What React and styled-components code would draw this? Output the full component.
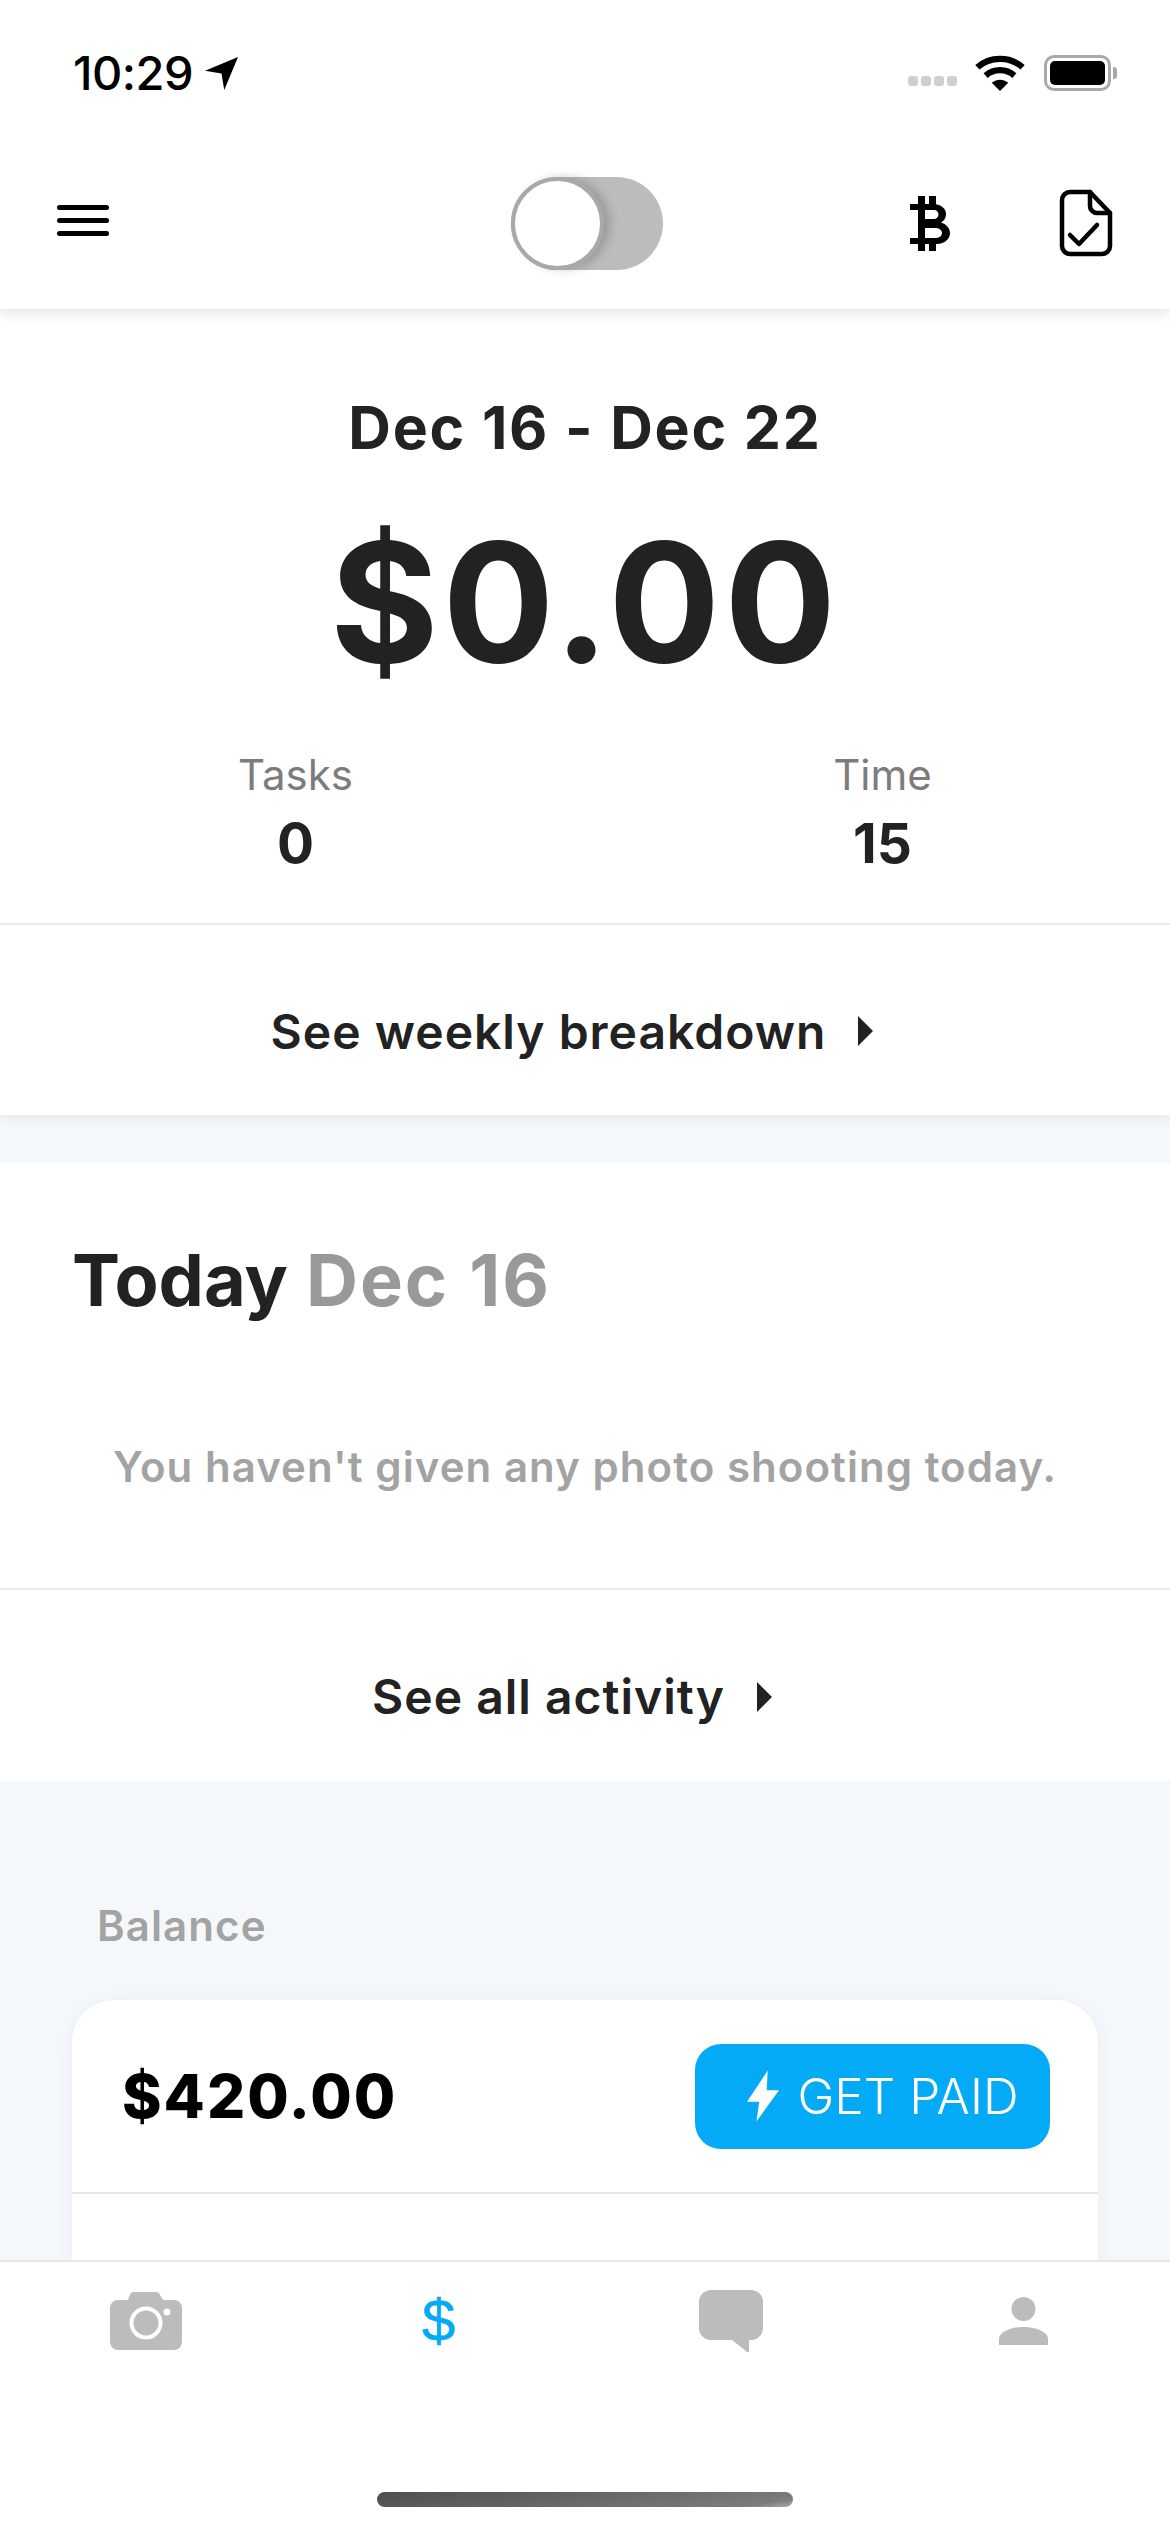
import React from "react";
import styled, { createGlobalStyle } from "styled-components";

const GlobalStyle = createGlobalStyle`
  html, body {
    margin: 0;
    padding: 0;
    background: #fff;
    font-family: Inter, "Liberation Sans", sans-serif;
  }
  * { box-sizing: border-box; }
`;

const Screen = styled.div`
  width: 1170px;
  height: 2532px;
  display: flex;
  flex-direction: column;
  overflow: hidden;
  background: #f5f8fb;
  color: #222;
`;

const Header = styled.header`
  height: 309px;
  flex: none;
  background: #fff;
  box-shadow: 0 2px 14px rgba(0, 0, 0, 0.14);
  position: relative;
  z-index: 2;
`;

const StatusBar = styled.div`
  height: 137px;
  padding: 48px 59px 0 73px;
  display: flex;
  justify-content: space-between;
  align-items: flex-start;
`;

const Clock = styled.div`
  display: flex;
  align-items: center;
  gap: 12px;
  font-size: 47px;
  line-height: 50px;
  font-weight: 500;
  letter-spacing: -0.5px;
  color: #000;
`;

const StatusIcons = styled.div`
  display: flex;
  align-items: center;
  gap: 15px;
  height: 50px;
`;

const SignalDots = styled.div`
  display: flex;
  gap: 3px;
  margin: 16px 3px 0 0;
`;

const SignalDot = styled.span`
  width: 10px;
  height: 10px;
  border-radius: 3px;
  background: #cfcfcf;
`;

const Battery = styled.div`
  width: 67px;
  height: 36px;
  margin-left: 4px;
  border: 3px solid #a9a9a9;
  border-radius: 10px;
  padding: 3px;
  position: relative;
  &::after {
    content: "";
    position: absolute;
    right: -9px;
    top: 9px;
    width: 4px;
    height: 12px;
    background: #a9a9a9;
    border-radius: 0 3px 3px 0;
  }
`;

const BatteryFill = styled.div`
  width: 100%;
  height: 100%;
  background: #000;
  border-radius: 5px;
`;

const NavBar = styled.nav`
  height: 172px;
  padding: 0 57px 0 57px;
  display: grid;
  grid-template-columns: 1fr 152px 1fr;
  align-items: center;
`;

const Hamburger = styled.div`
  width: 52px;
  display: flex;
  flex-direction: column;
  gap: 8px;
  margin-bottom: 5px;
`;

const HamburgerLine = styled.span`
  height: 5px;
  background: #000;
  border-radius: 3px;
`;

const Toggle = styled.div`
  width: 152px;
  height: 93px;
  margin-left: 2px;
  border-radius: 47px;
  background: #bcbcbc;
  position: relative;
`;

const ToggleKnob = styled.div`
  position: absolute;
  left: 0;
  top: 0;
  width: 93px;
  height: 93px;
  border-radius: 50%;
  background: #fff;
  border: 4px solid #a9a9a9;
  box-shadow: 6px 0 10px rgba(0, 0, 0, 0.18);
`;

const NavActions = styled.div`
  display: flex;
  justify-content: flex-end;
  align-items: center;
  gap: 109px;
  color: #000;
`;

const Panel = styled.section`
  flex: none;
  background: #fff;
  ${(p) => p.$raised && "box-shadow: 0 2px 14px rgba(0, 0, 0, 0.08);"}
  ${(p) => p.$gapTop && `margin-top: ${p.$gapTop}px;`}
`;

const WeekSummary = styled.div`
  height: 614px;
  padding-top: 84px;
  display: flex;
  flex-direction: column;
  align-items: center;
`;

const WeekRange = styled.div`
  font-size: 59px;
  line-height: 70px;
  font-weight: 700;
  letter-spacing: 1.8px;
`;

const WeekTotal = styled.div`
  font-size: 166px;
  line-height: 200px;
  font-weight: 700;
  letter-spacing: 4px;
  margin-top: 39px;
`;

const Stats = styled.div`
  width: 100%;
  display: grid;
  grid-template-columns: 1fr 1fr;
  margin-top: 45px;
`;

const Stat = styled.div`
  display: flex;
  flex-direction: column;
  align-items: center;
  transform: translateX(${(p) => p.$shift}px);
`;

const StatLabel = styled.div`
  font-size: 42px;
  line-height: 56px;
  color: #7c7c7c;
`;

const StatValue = styled.div`
  font-size: 55px;
  line-height: 66px;
  font-weight: 700;
  margin-top: 7px;
`;

const LinkRow = styled.div`
  height: ${(p) => p.$height}px;
  border-top: 2px solid #eaeaea;
  padding: 22px 26px 0 0;
  display: flex;
  align-items: center;
  justify-content: center;
  gap: 32px;
  font-size: 48px;
  font-weight: 600;
  letter-spacing: 1px;
  color: #222;
`;

const Caret = styled.span`
  width: 0;
  height: 0;
  border-left: 15px solid #222;
  border-top: 15px solid transparent;
  border-bottom: 15px solid transparent;
`;

const TodayBody = styled.div`
  height: 425px;
  padding: 74px 72px 0;
`;

const TodayTitle = styled.div`
  font-size: 72px;
  line-height: 86px;
  font-weight: 700;
  word-spacing: 1px;
`;

const TodayDate = styled.span`
  color: #999;
  letter-spacing: 2px;
`;

const EmptyNote = styled.div`
  margin: 117px -72px 0;
  text-align: center;
  font-size: 42px;
  line-height: 54px;
  font-weight: 600;
  letter-spacing: 1.05px;
  color: #a3a3a3;
`;

const BalanceSection = styled.section`
  flex: 1;
  min-height: 0;
  padding: 117px 72px 0;
  overflow: hidden;
`;

const BalanceLabel = styled.div`
  font-size: 42px;
  line-height: 56px;
  font-weight: 600;
  letter-spacing: 1.1px;
  color: #a3a3a3;
  margin: 0 0 46px 25px;
`;

const BalanceCard = styled.div`
  height: 400px;
  background: #fff;
  border-radius: 42px;
  box-shadow: 0 2px 16px rgba(40, 60, 90, 0.07);
`;

const BalanceRow = styled.div`
  height: 194px;
  padding: 0 48px 0 50px;
  border-bottom: 2px solid #e6e6e6;
  display: flex;
  align-items: center;
  justify-content: space-between;
`;

const BalanceAmount = styled.div`
  font-size: 60px;
  font-weight: 800;
  letter-spacing: 2px;
  color: #000;
`;

const PayButton = styled.button`
  width: 355px;
  height: 105px;
  border: none;
  border-radius: 26px;
  background: #05aaf7;
  color: #fff;
  display: flex;
  align-items: center;
  justify-content: center;
  gap: 18px;
  font-family: Inter, sans-serif;
  font-size: 49.5px;
  font-weight: 350;
  padding: 0 0 0 21px;
`;

const TabBar = styled.footer`
  height: 272px;
  flex: none;
  background: #fff;
  border-top: 2px solid #e6e8ea;
  display: flex;
  flex-direction: column;
  position: relative;
  z-index: 2;
`;

const Tabs = styled.div`
  display: grid;
  grid-template-columns: repeat(4, 1fr);
  height: 230px;
  padding-top: 26px;
`;

const Tab = styled.div`
  display: flex;
  justify-content: center;
  height: 66px;
  align-items: center;
  color: ${(p) => (p.$active ? "#05aaf7" : "#bcbcbc")};
`;

const DollarGlyph = styled.span`
  font-size: 60px;
  line-height: 1;
  font-family: "Liberation Sans", sans-serif;
  -webkit-text-stroke: 0.5px #05aaf7;
`;

const HomeIndicator = styled.div`
  width: 416px;
  height: 15px;
  border-radius: 8px;
  margin: 0 auto;
  background: linear-gradient(170deg, #4e4e4e, #7c7c7c 90%, #aaa);
`;

const LocationArrow = () => (
  <svg width="33" height="33" viewBox="0 0 24 24" fill="#000">
    <path d="M24 0 L0 10 L12 12 L14 24 Z" />
  </svg>
);

const Wifi = () => (
  <svg width="50" height="37" viewBox="3 0 44 36" fill="none" stroke="#000" strokeWidth="6">
    <path d="M3 12 C15 1 35 1 47 12" />
    <path d="M11 20 C19 13 31 13 39 20" />
    <path d="M25 35 L17 27 C22 23 28 23 33 27 Z" fill="#000" stroke="none" />
  </svg>
);

const BitcoinMark = () => (
  <svg width="40" height="55" viewBox="0 0 40 55" fill="#000" fillRule="evenodd">
    <path d="M8 0 H15 V8 H19 V0 H26 V8.3 C32 9.5 36 13 36 18 C36 22 34 25 31 26.5 C36 28 40 32 40 37 C40 43 35 47.5 27 48 H26 V55 H19 V48 H15 V55 H8 V48 H0 V42 H8 V14 H0 V8 H8 Z M15 14 V23 H24 C26.5 23 28.5 21 28.5 18.5 C28.5 16 26.5 14 24 14 Z M15 32 V42 H25 C29 42 32 40 32 37 C32 34 29 32 25 32 Z" />
  </svg>
);

const FileCheck = () => (
  <svg width="54" height="68" viewBox="0 0 54 68" fill="none" stroke="#000" strokeWidth="4.5" strokeLinecap="round" strokeLinejoin="round">
    <path d="M11 3 H31 L51 24 V57 a8 8 0 0 1 -8 8 H11 a8 8 0 0 1 -8 -8 V11 a8 8 0 0 1 8 -8 Z" />
    <path d="M31 3 V17 a7 7 0 0 0 7 7 H51" />
    <path d="M11 46 L20 55 L38 36" />
  </svg>
);

const Bolt = () => (
  <svg width="32" height="54" viewBox="0 0 34 54" fill="#fff">
    <path d="M22 0 L0 33 H13 L10 54 L34 21 H21 Z" />
  </svg>
);

const CameraIcon = () => (
  <svg width="72" height="58" viewBox="0 0 72 58">
    <path
      fill="currentColor"
      d="M24 0 H46 a4 4 0 0 1 4 3 L53 8 H64 a8 8 0 0 1 8 8 V50 a8 8 0 0 1 -8 8 H8 a8 8 0 0 1 -8 -8 V16 a8 8 0 0 1 8 -8 H18 L20 3 a4 4 0 0 1 4 -3 Z"
    />
    <circle cx="36" cy="31" r="14.5" fill="none" stroke="#fff" strokeWidth="4" />
    <circle cx="57" cy="20" r="3.5" fill="#fff" />
  </svg>
);

const ChatIcon = () => (
  <svg width="64" height="62" viewBox="0 0 64 62">
    <path
      fill="currentColor"
      d="M12 0 H52 a12 12 0 0 1 12 12 V38 a12 12 0 0 1 -12 12 H50 V60 a1.5 1.5 0 0 1 -3 1 L33 50 H12 a12 12 0 0 1 -12 -12 V12 a12 12 0 0 1 12 -12 Z"
    />
  </svg>
);

const PersonIcon = () => (
  <svg width="49" height="48" viewBox="0 0 49 48">
    <circle cx="24.5" cy="12" r="12" fill="currentColor" />
    <path fill="currentColor" d="M0 48 V42 C0 35 12 30 24.5 30 C37 30 49 35 49 42 V48 Z" />
  </svg>
);

export default function App() {
  return (
    <Screen>
      <GlobalStyle />
      <Header>
        <StatusBar>
          <Clock>
            10:29
            <LocationArrow />
          </Clock>
          <StatusIcons>
            <SignalDots>
              {[0, 1, 2, 3].map((i) => (
                <SignalDot key={i} />
              ))}
            </SignalDots>
            <Wifi />
            <Battery>
              <BatteryFill />
            </Battery>
          </StatusIcons>
        </StatusBar>
        <NavBar>
          <Hamburger>
            <HamburgerLine />
            <HamburgerLine />
            <HamburgerLine />
          </Hamburger>
          <Toggle>
            <ToggleKnob />
          </Toggle>
          <NavActions>
            <BitcoinMark />
            <FileCheck />
          </NavActions>
        </NavBar>
      </Header>

      <Panel $raised>
        <WeekSummary>
          <WeekRange>Dec 16 - Dec 22</WeekRange>
          <WeekTotal>$0.00</WeekTotal>
          <Stats>
            <Stat $shift={3}>
              <StatLabel>Tasks</StatLabel>
              <StatValue>0</StatValue>
            </Stat>
            <Stat $shift={5}>
              <StatLabel>Time</StatLabel>
              <StatValue>15</StatValue>
            </Stat>
          </Stats>
        </WeekSummary>
        <LinkRow $height={192}>
          See weekly breakdown <Caret />
        </LinkRow>
      </Panel>

      <Panel $gapTop={48}>
        <TodayBody>
          <TodayTitle>
            Today <TodayDate>Dec 16</TodayDate>
          </TodayTitle>
          <EmptyNote>You haven't given any photo shooting today.</EmptyNote>
        </TodayBody>
        <LinkRow $height={193}>
          See all activity <Caret />
        </LinkRow>
      </Panel>

      <BalanceSection>
        <BalanceLabel>Balance</BalanceLabel>
        <BalanceCard>
          <BalanceRow>
            <BalanceAmount>$420.00</BalanceAmount>
            <PayButton>
              <Bolt />
              GET PAID
            </PayButton>
          </BalanceRow>
        </BalanceCard>
      </BalanceSection>

      <TabBar>
        <Tabs>
          <Tab>
            <CameraIcon />
          </Tab>
          <Tab $active>
            <DollarGlyph>$</DollarGlyph>
          </Tab>
          <Tab>
            <ChatIcon />
          </Tab>
          <Tab>
            <PersonIcon />
          </Tab>
        </Tabs>
        <HomeIndicator />
      </TabBar>
    </Screen>
  );
}
